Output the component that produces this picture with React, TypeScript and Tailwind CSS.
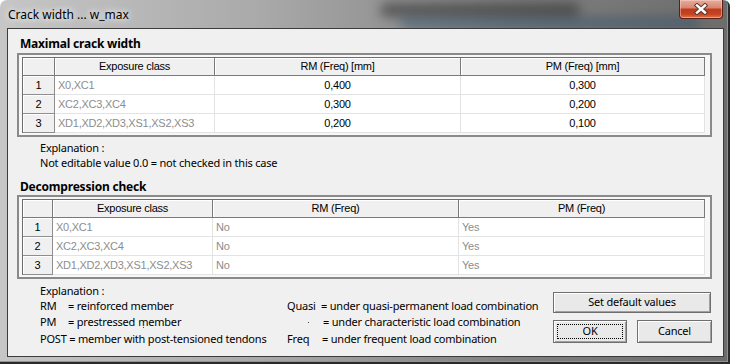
const ui = "font-['Noto_Sans',sans-serif]";
const grid = "font-['Liberation_Sans',Arial,sans-serif] text-[11px] tracking-[-0.25px] leading-none";

const headCell =
  "flex items-center justify-center border-r border-b border-[#7a7a7a] bg-[#f0f0f0] shadow-[inset_1px_1px_0_#ffffff] text-black";
const numCell =
  "flex items-center justify-center border-r border-b border-[#8e8e8e] bg-[#f0f0f0] shadow-[inset_1px_1px_0_#ffffff] text-black";
const dataCell = "flex items-center border-r border-b border-[#e3e3e3] bg-white px-[3px]";

interface GridRow {
  exposure: string;
  rm: string;
  pm: string;
}

function DataGrid({
  cols,
  headers,
  rows,
  centered,
}: {
  cols: string;
  headers: string[];
  rows: GridRow[];
  centered: boolean;
}) {
  const valueClass = centered
    ? `${dataCell} justify-center text-black`
    : `${dataCell} text-[#8d8d8d]`;
  return (
    <div className="ml-[9px] w-[695px] border-2 border-[#8a8a8a] bg-[#f7f7f7] pt-[2px] pl-[3px] pr-[5px] pb-[2px]">
      <div className={`grid ${cols} border-l border-t border-[#6e6e6e] ${grid}`}>
        <div className={`${headCell} h-[18px]`} />
        {headers.map((h) => (
          <div key={h} className={`${headCell} h-[18px]`}>
            {h}
          </div>
        ))}
        {rows.map((r, i) => (
          <div key={r.exposure} className="contents">
            <div className={`${numCell} h-[19px]`}>{i + 1}</div>
            <div className={`${dataCell} text-[#8d8d8d]`}>{r.exposure}</div>
            <div className={valueClass}>{r.rm}</div>
            <div className={valueClass}>{r.pm}</div>
          </div>
        ))}
      </div>
    </div>
  );
}

function CloseButton() {
  return (
    <div className="ml-auto mr-[7px] flex h-[19px] w-[44px] items-center justify-center rounded-b-[4px] border border-t-0 border-[#5a2216] bg-[linear-gradient(180deg,#e7ad9c_0%,#d78872_42%,#c33a1d_52%,#c4421f_78%,#de7650_100%)] shadow-[inset_0_0_0_1px_rgba(255,220,210,0.45)]">
      <svg width="14" height="12" viewBox="0 0 14 12">
        <path d="M3 2.5 L11 9.5 M11 2.5 L3 9.5" stroke="#5b3a32" strokeWidth="4.4" strokeLinecap="square" />
        <path d="M3 2.5 L11 9.5 M11 2.5 L3 9.5" stroke="#ffffff" strokeWidth="2.4" strokeLinecap="square" />
      </svg>
    </div>
  );
}

const btn =
  "flex items-center justify-center border border-[#6f6f6f] bg-[#e9e9e9] shadow-[inset_1px_1px_0_#ffffff,inset_-1px_-1px_0_#a0a0a0] text-black";

export default function App() {
  return (
    <div className="relative h-[364px] w-[730px] overflow-hidden rounded-t-[7px] bg-[linear-gradient(90deg,#c6c6c6_0%,#aaaaaa_35%,#808080_70%,#6c6c6c_100%)] shadow-[inset_-2px_-2px_0_#2a2a2a,inset_-3px_-3px_0_#27b8e4]">
      <div className="pointer-events-none absolute left-[380px] top-[3px] h-[14px] w-[200px] rounded-full bg-[#2e2e2e]/60 blur-[6px]" />
      <div className="pointer-events-none absolute left-[400px] top-[18px] h-[10px] w-[300px] rounded-full bg-[#1f4668]/50 blur-[6px]" />

      <div className="relative flex h-[28px] items-start">
        <span
          className={`ml-[8px] mt-[7px] text-[12px] leading-[16px] text-black [text-shadow:0_0_6px_#ffffff,0_0_10px_rgba(255,255,255,0.7)] ${ui}`}
        >
          Crack width ... w_max
        </span>
        <CloseButton />
      </div>

      <div className={`relative ml-[7px] flex h-[329px] w-[717px] flex-col border border-[#3c3c3c] bg-[#f0f0f0] ${ui}`}>
        <div className="ml-[12px] mt-[7px] h-[16px] text-[12px] font-bold leading-[16px] tracking-[-0.2px]">
          Maximal crack width
        </div>
        <div className="mt-[1px]">
          <DataGrid
            cols="grid-cols-[32px_160px_246px_244px]"
            headers={["Exposure class", "RM (Freq) [mm]", "PM (Freq) [mm]"]}
            centered
            rows={[
              { exposure: "X0,XC1", rm: "0,400", pm: "0,300" },
              { exposure: "XC2,XC3,XC4", rm: "0,300", pm: "0,200" },
              { exposure: "XD1,XD2,XD3,XS1,XS2,XS3", rm: "0,200", pm: "0,100" },
            ]}
          />
        </div>

        <div className="ml-[32px] mt-[3px] text-[11px] leading-[15px] tracking-[-0.2px]">
          <div className="h-[15px]">Explanation :</div>
          <div className="h-[15px]">Not editable value 0.0 = not checked in this case</div>
        </div>

        <div className="ml-[12px] mt-[9px] h-[16px] text-[12px] font-bold leading-[16px] tracking-[-0.2px]">
          Decompression check
        </div>
        <DataGrid
          cols="grid-cols-[30px_160px_246px_246px]"
          headers={["Exposure class", "RM (Freq)", "PM (Freq)"]}
          centered={false}
          rows={[
            { exposure: "X0,XC1", rm: "No", pm: "Yes" },
            { exposure: "XC2,XC3,XC4", rm: "No", pm: "Yes" },
            { exposure: "XD1,XD2,XD3,XS1,XS2,XS3", rm: "No", pm: "Yes" },
          ]}
        />

        <div className="flex text-[11px] tracking-[-0.2px]">
          <div className="ml-[32px] w-[247px] pt-[4px]">
            <div className="flex h-[16px] items-center">Explanation :</div>
            <div className="flex h-[15px] items-center">
              <span className="w-[28px]">RM</span>= reinforced member
            </div>
            <div className="flex h-[16px] items-center">
              <span className="w-[28px]">PM</span>= prestressed{" "}
              <span className="relative ml-[3px]">
                m
                <span className="absolute left-[5px] top-[13px] h-[1px] w-[1px] bg-[#444]" />
              </span>
              ember
            </div>
            <div className="flex h-[18px] items-center">POST = member with post-tensioned tendons</div>
          </div>

          <div className="w-[266px] pt-[20px]">
            <div className="flex h-[15px] items-center">
              <span className="w-[34px]">Quasi</span>= under quasi-permanent load combination
            </div>
            <div className="flex h-[16px] items-center pt-[1px]">
              <span className="flex w-[36px] items-center pl-[21px]">
                <span className="h-[1px] w-[1px] bg-[#444]" />
              </span>
              = under characteristic load combination
            </div>
            <div className="flex h-[18px] items-center">
              <span className="w-[35px]">Freq</span>= under frequent load combination
            </div>
          </div>

          <div className="w-[159px] pt-[13px]">
            <div className={`${btn} h-[21px] w-[158px]`}>Set default values</div>
            <div className="mt-[7px] flex gap-[10px]">
              <div className={`${btn} h-[23px] w-[74px] border-[#3a3a3a] p-[3px]`}>
                <div className="flex h-full w-full items-center justify-center border border-dotted border-black">
                  OK
                </div>
              </div>
              <div className={`${btn} h-[23px] w-[75px]`}>Cancel</div>
            </div>
          </div>
        </div>
      </div>
    </div>
  );
}
